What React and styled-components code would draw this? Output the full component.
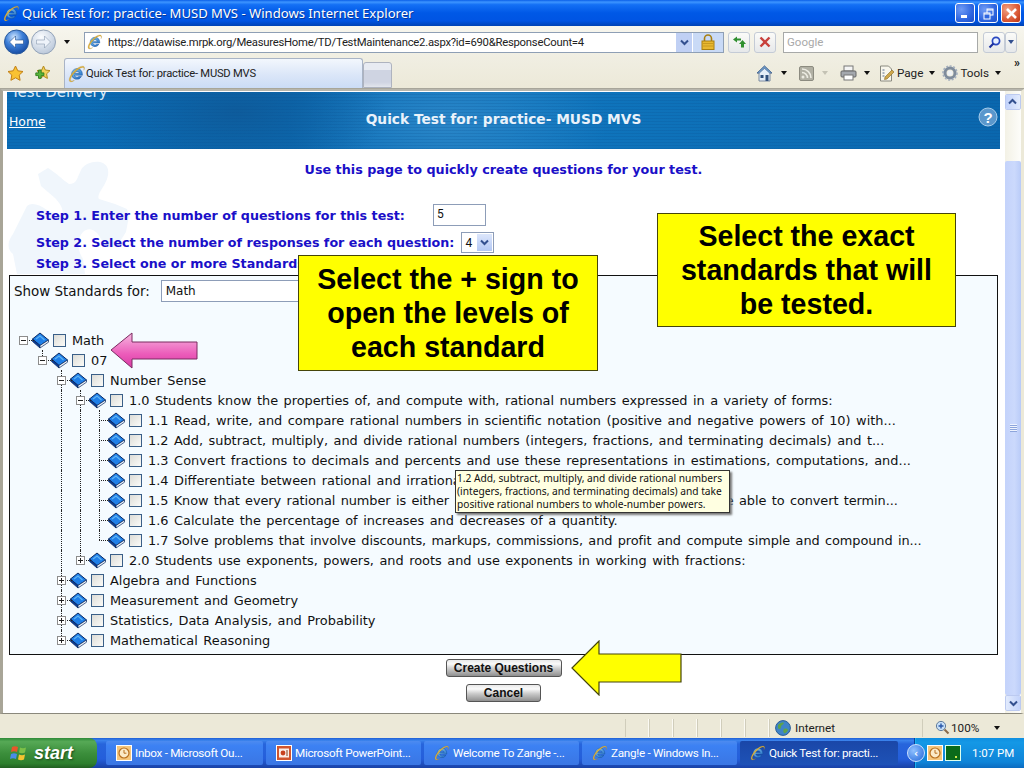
import React from 'react'
import styled, { createGlobalStyle, css } from 'styled-components'

const Global = createGlobalStyle`
  html, body { margin: 0; padding: 0; background: #ece9d8; }
  * { box-sizing: border-box; }
`

const ui = `Roboto, "Noto Sans", sans-serif`
const verdana = `"DejaVu Sans", Verdana, sans-serif`

const Screen = styled.div`
  position: relative;
  width: 1024px;
  height: 768px;
  overflow: hidden;
  display: flex;
  flex-direction: column;
  font-family: ${ui};
`

/* ---- title bar ---- */
const TitleBar = styled.div`
  height: 26px;
  flex: none;
  display: flex;
  align-items: center;
  padding: 0 3px;
  background: linear-gradient(#0a5fe8 0%, #3d95ff 8%, #1470f5 18%, #0058e6 50%, #0054e3 80%, #0043b4 100%);
  color: #fff;
  font: 13.1px "Noto Sans", sans-serif;
  gap: 2px;
`
const TitleText = styled.span`
  flex: 1;
  white-space: nowrap;
  text-shadow: 1px 1px 0 #0a3a9c;
`
const WinButtons = styled.div`
  display: flex;
  gap: 3px;
`
const WinButton = styled.div`
  width: 20px;
  height: 20px;
  border: 1px solid #fff;
  border-radius: 3px;
  display: flex;
  align-items: center;
  justify-content: center;
  background: ${p => p.$red
    ? 'radial-gradient(circle at 30% 30%, #f0a184, #db5a36 60%, #b83212)'
    : 'radial-gradient(circle at 30% 30%, #6f9bf5, #2f66e0 60%, #1d4fc8)'};
`

/* ---- toolbars ---- */
const AddressBar = styled.div`
  height: 32px;
  flex: none;
  display: flex;
  align-items: center;
  padding: 0 7px 0 4px;
  background: linear-gradient(#f7f6ee, #f0eee2);
`
const NavCluster = styled.div`
  display: flex;
  align-items: center;
  width: 80px;
  gap: 2px;
`
const Caret = styled.span`
  display: inline-block;
  width: 0;
  height: 0;
  border-left: 3.5px solid transparent;
  border-right: 3.5px solid transparent;
  border-top: 4px solid ${p => p.$color || '#111'};
  margin: ${p => p.$margin || '0'};
`
const AddressBox = styled.div`
  width: 640px;
  flex: none;
  height: 21px;
  display: flex;
  align-items: center;
  border: 1px solid #8e9fb5;
  background: #fff;
  font-size: 11.3px;
  letter-spacing: -0.25px;
  color: #222;
  padding-left: 2px;
  white-space: nowrap;
`
const UrlText = styled.span`
  flex: 1;
  margin-left: 5px;
  overflow: hidden;
`
const AddrDrop = styled.div`
  width: 16px;
  height: 19px;
  background: #c0d0f4;
  display: flex;
  align-items: center;
  justify-content: center;
`
const LockBox = styled.div`
  width: 30px;
  height: 19px;
  margin-left: 1px;
  background: #c9daf6;
  display: flex;
  align-items: center;
  justify-content: center;
`
const ToolBtn = styled.div`
  width: ${p => p.$w ?? 22}px;
  height: 21px;
  flex: none;
  margin-left: ${p => p.$ml ?? 4}px;
  border: 1px solid #c4cbd6;
  border-radius: 3px;
  background: linear-gradient(#fbfbf8, #e6e8ea);
  display: flex;
  align-items: center;
  justify-content: center;
`
const SearchBox = styled.div`
  width: 195px;
  flex: none;
  height: 21px;
  margin-left: 7px;
  border: 1px solid #a7a9a8;
  background: #fff;
  color: #a9a9a9;
  font-size: 11.5px;
  padding: 2px 3px;
  line-height: 15px;
`
const TabBar = styled.div`
  height: 31px;
  flex: none;
  display: flex;
  align-items: flex-end;
  padding-left: 7px;
  background: linear-gradient(#f0eee2, #ece9d8);
  border-bottom: 1px solid #a8a69a;
`
const FavIcons = styled.div`
  display: flex;
  align-items: center;
  gap: 10px;
  width: 57px;
  height: 30px;
`
const Tab = styled.div`
  width: 299px;
  height: 30px;
  border: 1px solid #a9b4c6;
  border-bottom: none;
  border-radius: 3px 3px 0 0;
  background: linear-gradient(#f3f7fd, #dbe6f8 55%, #cbdcf6);
  display: flex;
  align-items: center;
  padding-left: 3px;
  font-size: 11.2px;
  letter-spacing: -0.23px;
  color: #222;
`
const NewTab = styled.div`
  width: 29px;
  height: 26px;
  border: 1px solid #aeb3bf;
  border-radius: 3px 3px 0 0;
  background: linear-gradient(#e8ebf2 0 30%, #cfd4e2 30% 80%, #e2e5ec);
`
const Commands = styled.div`
  flex: 1;
  height: 30px;
  display: flex;
  align-items: center;
  justify-content: flex-end;
  font-size: 11.7px;
  color: #222;
`
const CmdItem = styled.span`
  display: inline-flex;
  align-items: center;
  margin-left: ${p => p.$ml || 0}px;
  gap: 2px;
`
const Chevrons = styled.span`
  align-self: flex-start;
  font-size: 12px;
  font-weight: 700;
  line-height: 10px;
  margin: 0 4px 0 13px;
`

/* ---- page ---- */
const PageFrame = styled.div`
  flex: 1;
  min-height: 0;
  display: flex;
  background: #fff;
  border-left: 3px solid #a8a597;
  border-top: 2px solid #b7b6ad;
  border-bottom: 1px solid #8a887c;
  border-right: 3px solid #ece9d8;
`
const Content = styled.div`
  position: relative;
  width: 1002px;
  flex: none;
  padding: 1px 5px 0 4px;
  overflow: hidden;
`
const Puzzle = styled.div`
  position: absolute;
  left: 2px;
  top: 63px;
`
const Banner = styled.div`
  position: relative;
  height: 57px;
  overflow: hidden;
  color: #fff;
  background:
    repeating-linear-gradient(#0000 0 2px, #0a4f8f33 2px 3px),
    radial-gradient(ellipse 150px 70px at 230px 20px, #0e5c9c, #0000),
    radial-gradient(ellipse 160px 80px at 440px 30px, #2a86c8, #0000),
    linear-gradient(90deg, #0a6cb5, #0b6cb4 30%, #1077bf 50%, #0a67ae 100%);
`
const BannerRow = styled.div`
  display: grid;
  grid-template-columns: 1fr auto 1fr;
  align-items: center;
  margin-top: 11px;
`
const Delivery = styled.div`
  font: 15px ${verdana};
  line-height: 18px;
  margin: -9px 0 0 4px;
  color: #d8e8f6;
`
const HomeLink = styled.a`
  font: 12.4px ${verdana};
  text-decoration: underline;
  color: #fff;
  margin-left: 2px;
`
const BannerTitle = styled.div`
  font: bold 13.75px ${verdana};
  color: #eaf2fa;
  margin-top: -5px;
`
const HelpIcon = styled.div`
  justify-self: end;
  margin: -5px 2px 0 0;
`
const Intro = styled.div`
  position: relative;
  margin-top: 13px;
  text-align: center;
  font: bold 12.75px ${verdana};
  line-height: 16px;
  color: #1a0fc8;
`
const Step = styled.div`
  position: relative;
  display: flex;
  align-items: center;
  height: ${p => p.$h}px;
  margin-top: ${p => p.$mt || 0}px;
  padding-left: 29px;
  font: bold 12.7px ${verdana};
  color: #1a0fc8;
  white-space: nowrap;
`
const NumInput = styled.div`
  width: 53px;
  height: 22px;
  margin-left: 28px;
  border: 1px solid #8d9db8;
  background: #fff;
  font: 12px ${ui};
  color: #111;
  padding: 2px 3px;
`
const SmallSelect = styled.div`
  width: 33px;
  height: 21px;
  margin-left: 7px;
  border: 1px solid #8d9db8;
  background: #fff;
  font: 12px ${ui};
  color: #111;
  display: flex;
  align-items: center;
  justify-content: space-between;
  padding: 0 1px 0 3px;
`
const DropBtn = styled.div`
  width: 15px;
  height: 17px;
  background: linear-gradient(#dce6fb, #b4c8f4);
  display: flex;
  align-items: center;
  justify-content: center;
`
const TreePanel = styled.div`
  position: relative;
  margin: 1px 2px 0 2px;
  width: 989px;
  height: 380px;
  border: 1px solid #111;
  background: #f5fbff;
  padding-left: 3px;
`
const ShowRow = styled.div`
  display: flex;
  align-items: center;
  height: 22px;
  margin-top: 4px;
  padding-left: 1px;
  font: 13.45px ${verdana};
  color: #111;
  gap: 11px;
`
const ShowSelect = styled.div`
  width: 240px;
  height: 22px;
  border: 1px solid #8d9db8;
  background: #fff;
  font: 12px ${verdana};
  padding: 3px 4px;
`
const Tree = styled.div`
  margin: 28px 0 0 1px;
`
const Row = styled.div`
  display: flex;
  align-items: center;
  height: 20px;
  font: 12.9px ${verdana};
  word-spacing: 1.4px;
  letter-spacing: ${p => p.$ls || 0}px;
  color: #111;
  white-space: nowrap;
`
const Guide = styled.span`
  position: relative;
  width: 19px;
  height: 20px;
  flex: none;
  ${p => p.$line && css`
    &::before {
      content: '';
      position: absolute;
      left: 9px;
      top: 0;
      bottom: 0;
      border-left: 1px dotted #222;
    }
  `}
`
const Joint = styled.span`
  position: relative;
  width: 19px;
  height: 20px;
  flex: none;
  &::before {
    content: '';
    position: absolute;
    left: 9px;
    top: ${p => p.$root ? '10px' : '0'};
    height: ${p => p.$root ? '0' : p.$down ? '20px' : '10px'};
    border-left: 1px dotted #222;
  }
  &::after {
    content: '';
    position: absolute;
    left: 9px;
    right: -1px;
    top: 10px;
    border-top: 1px dotted #222;
  }
`
const Expander = styled.span`
  position: absolute;
  z-index: 1;
  left: 5px;
  top: 6px;
  width: 9px;
  height: 9px;
  border: 1px solid #8c8c8c;
  background: #fff;
  &::before {
    content: '';
    position: absolute;
    left: 1px;
    top: 3px;
    width: 5px;
    height: 1px;
    background: #222;
  }
  ${p => p.$plus && css`
    &::after {
      content: '';
      position: absolute;
      left: 3px;
      top: 1px;
      width: 1px;
      height: 5px;
      background: #222;
    }
  `}
`
const Check = styled.span`
  flex: none;
  width: 13px;
  height: 13px;
  margin: 0 6px 0 3px;
  border: 1px solid #3a5f88;
  background: linear-gradient(135deg, #dcdcd7, #fbfbf8);
`
const BookIcon = styled.svg`
  flex: none;
  margin-left: -2px;
`
const Actions = styled.div`
  position: relative;
  display: flex;
  flex-direction: column;
  align-items: center;
  gap: 7px;
  margin-top: 4px;
`
const GrayButton = styled.div`
  width: ${p => p.$w}px;
  height: 18px;
  border: 1px solid #555;
  border-radius: 3px;
  background: linear-gradient(#e9e9e9, #fafafa 25%, #c9c9c9 55%, #8f8f8f);
  font: bold 12px "Liberation Sans", Arial, sans-serif;
  color: #111;
  display: flex;
  align-items: center;
  justify-content: center;
`

/* ---- scrollbar ---- */
const Scrollbar = styled.div`
  width: 16px;
  flex: none;
  display: flex;
  flex-direction: column;
  background: linear-gradient(90deg, #f3f1e5, #fdfdfa);
  padding: 3px 0 2px;
`
const ScrollArrow = styled.div`
  height: 16px;
  flex: none;
  border: 1px solid #fff;
  outline: 1px solid #bccaf0;
  outline-offset: -1px;
  border-radius: 2px;
  background: linear-gradient(90deg, #e2ebfd, #c3d3fb);
  display: flex;
  align-items: center;
  justify-content: center;
  transform: ${p => p.$up ? 'rotate(180deg)' : 'none'};
`
const ScrollTrack = styled.div`
  flex: 1;
  padding: 51px 0 0;
  display: flex;
`
const Thumb = styled.div`
  flex: 1;
  border-radius: 2px;
  background: linear-gradient(90deg, #c4d3fb, #cbd9fc 60%, #b9cbf8);
  display: flex;
  align-items: center;
  justify-content: center;
`
const Grip = styled.div`
  width: 7px;
  height: 8px;
  background: repeating-linear-gradient(#eef3fe 0 1px, #8da5dc 1px 2px);
`

/* ---- status bar ---- */
const StatusBar = styled.div`
  height: 24px;
  flex: none;
  display: flex;
  align-items: center;
  background: #ece9d8;
  font-size: 11.7px;
  color: #222;
  padding: 3px 0 0 625px;
`
const StatusCell = styled.span`
  width: 24px;
  height: 18px;
  border-left: 1px solid #d0cdbb;
  border-right: 1px solid #fbfaf3;
`
const ZoneCell = styled.span`
  display: flex;
  align-items: center;
  gap: 4px;
  width: 154px;
  height: 18px;
  padding-left: 5px;
  border-left: 1px solid #d0cdbb;
  border-right: 1px solid #d0cdbb;
`
const ZoomCell = styled.span`
  display: flex;
  align-items: center;
  gap: 1px;
  padding-left: 12px;
`

/* ---- taskbar ---- */
const Taskbar = styled.div`
  height: 30px;
  flex: none;
  display: flex;
  align-items: center;
  background: linear-gradient(#1f5fd6 0, #3a82ec 8%, #2765dc 20%, #245edb 70%, #1941a5);
  color: #fff;
  font-size: 11.7px;
`
const StartButton = styled.div`
  width: 97px;
  height: 30px;
  flex: none;
  display: flex;
  align-items: center;
  padding-left: 10px;
  gap: 5px;
  border-radius: 0 8px 8px 0;
  background: linear-gradient(#2f8a38, #56a956 12%, #3c8f3c 50%, #2d7f2d 85%, #215f21);
  font: italic bold 18px "Liberation Sans", Arial, sans-serif;
  text-shadow: 1px 1px 2px #1a4a1a;
`
const TaskItems = styled.div`
  flex: 1;
  display: flex;
  gap: 3px;
  padding-left: 9px;
`
const TaskItem = styled.div`
  width: ${p => p.$w}px;
  height: 24px;
  flex: none;
  border-radius: 2px;
  display: flex;
  align-items: center;
  gap: 3px;
  padding-left: 10px;
  letter-spacing: -0.3px;
  white-space: nowrap;
  background: ${p => p.$active
    ? 'linear-gradient(#1a47a8, #1e52b7)'
    : 'linear-gradient(#4d8bf0, #3c81f3 20%, #3a76e4)'};
`
const Tray = styled.div`
  width: 110px;
  height: 30px;
  flex: none;
  display: flex;
  align-items: center;
  gap: 2px;
  background: linear-gradient(#0f8fe0, #1498e6 15%, #0f84d8 80%, #0c6bc0);
  border-left: 1px solid #0b3f98;
  box-shadow: inset 1px 0 0 #18b3f0;
`
const TrayExpand = styled.span`
  width: 18px;
  height: 18px;
  margin-left: -8px;
  border-radius: 50%;
  background: radial-gradient(circle at 35% 35%, #8fc0ff, #2266d8);
  border: 1px solid #cfe2ff;
  font: bold 10px ${verdana};
  display: flex;
  align-items: center;
  justify-content: center;
`
const Clock = styled.span`
  margin-left: 9px;
  font-size: 11.5px;
`

/* ---- overlays ---- */
const Callout = styled.div`
  position: absolute;
  left: ${p => p.$x}px;
  top: ${p => p.$y}px;
  width: ${p => p.$w}px;
  height: ${p => p.$h}px;
  border: 1px solid #45450a;
  background: #ffff00;
  color: #000;
  font: bold 28.6px/34px "Liberation Sans", Arial, sans-serif;
  text-align: center;
  padding-top: ${p => p.$pt}px;
`
const Tip = styled.div`
  position: absolute;
  left: 455px;
  top: 470px;
  width: 275px;
  height: 43px;
  padding: 1px 1px;
  border: 1px solid #333;
  background: #ffffe1;
  box-shadow: 2px 2px 2px #777;
  font: 10.2px/13px "Noto Sans", sans-serif;
  color: #111;
  white-space: nowrap;
`
const OverlayArrow = styled.svg`
  position: absolute;
  left: ${p => p.$x}px;
  top: ${p => p.$y}px;
`

/* ---- icons ---- */
const IeIcon = ({ size = 16 }) => (
  <svg width={size} height={size} viewBox="0 0 16 16">
    <defs>
      <linearGradient id="iee" x1="0" y1="0" x2="1" y2="1">
        <stop offset="0" stopColor="#8fd3f5" />
        <stop offset="1" stopColor="#1560c0" />
      </linearGradient>
    </defs>
    <path d="M8 3.2a4.8 4.8 0 0 0-4.8 5 4.7 4.7 0 0 0 8.8 2.1H9.6a2.4 2.4 0 0 1-3.9-1.2H12.8C13 5.4 11 3.2 8 3.2Zm-2.3 4.2A2.4 2.4 0 0 1 10.3 7.4Z" fill="url(#iee)" stroke="#0e4a94" strokeWidth=".4" />
    <path d="M13.8 1.2C11.5.4 6.5 3.4 3.2 8 1 11.2.4 14 1.8 14.8c1 .5 2.6-.2 4-1.3-1.2.6-2.6 1-3.2.5-.9-.8.1-3.2 2-5.7C7.6 4.5 11.8 1.6 13.6 2.2c.8.3.8 1.3.4 2.5.8-1.5.9-3 -.2-3.5Z" fill="#e0b23c" stroke="#a07a20" strokeWidth=".2" />
  </svg>
)

const NavButton = ({ back }) => (
  <svg width="25" height="26" viewBox="0 0 25 26">
    <defs>
      <radialGradient id="navb" cx=".4" cy=".3" r=".8">
        <stop offset="0" stopColor="#cfe6ff" />
        <stop offset=".45" stopColor="#3d7fd8" />
        <stop offset="1" stopColor="#0d3f96" />
      </radialGradient>
      <radialGradient id="navf" cx=".4" cy=".3" r=".8">
        <stop offset="0" stopColor="#fbfdff" />
        <stop offset="1" stopColor="#b3c2d6" />
      </radialGradient>
    </defs>
    <circle cx="12.5" cy="13" r="12" fill={back ? 'url(#navb)' : 'url(#navf)'} stroke={back ? '#2a5a9c' : '#93a3b8'} />
    <path d={back ? 'M5.5 13l6-6v4h8v4h-8v4Z' : 'M19.5 13l-6-6v4h-8v4h8v4Z'} fill={back ? '#fff' : '#eef3fa'} stroke={back ? '#1c4a8c' : '#8a9ab0'} strokeWidth=".6" />
  </svg>
)

const Chevron = ({ color = '#33508f' }) => (
  <svg width="9" height="7" viewBox="0 0 9 7"><path d="M1 1.5l3.5 3.5L8 1.5" fill="none" stroke={color} strokeWidth="2" /></svg>
)

const Lock = () => (
  <svg width="14" height="16" viewBox="0 0 14 16">
    <path d="M3.5 7V4.5a3.5 3.5 0 0 1 7 0V7" fill="none" stroke="#a87f10" strokeWidth="1.6" />
    <rect x="1" y="7" width="12" height="8.5" fill="#e8b830" stroke="#a87f10" />
    <path d="M1 9.5h12M1 12h12" stroke="#c89a1e" />
  </svg>
)

const Refresh = () => (
  <svg width="15" height="12" viewBox="0 0 15 12">
    <path d="M1 3.5L5 .5v2h4v2H5v2Z" fill="#2f8f2f" />
    <path d="M10.5 4l3.5 4h-2v3.5H9V8H7Z" fill="#2f8f2f" />
  </svg>
)

const StopX = () => (
  <svg width="12" height="12" viewBox="0 0 12 12"><path d="M1.5 1.5l9 9M10.5 1.5l-9 9" stroke="#c8403c" strokeWidth="2.4" /></svg>
)

const Magnifier = () => (
  <svg width="13" height="13" viewBox="0 0 13 13">
    <circle cx="8" cy="5" r="3.6" fill="#e8f0ff" stroke="#2a48c0" strokeWidth="1.7" />
    <path d="M5.5 7.5L1.5 11.5" stroke="#1c2f9c" strokeWidth="2.2" />
  </svg>
)

const Star = ({ size = 17 }) => (
  <svg width={size} height={size} viewBox="0 0 17 17">
    <path d="M8.5 1l2.3 4.8 5.2.7-3.8 3.6.9 5.2-4.6-2.5-4.6 2.5.9-5.2L1 6.5l5.2-.7Z" fill="#f9c232" stroke="#c27f14" />
  </svg>
)

const AddFav = () => (
  <svg width="17" height="17" viewBox="0 0 17 17">
    <path d="M9.5 1l1.8 4 4.7.6-3.4 3.2.8 4.6-3.9-2.2-3.9 2.2.8-4.6L3 5.6 7.7 5Z" fill="#f3d25a" stroke="#b48a1e" />
    <path d="M5 8v3H2v3h3v3h3v-3h3v-3H8V8Z" transform="translate(0 -2) scale(.9)" fill="#59b53a" stroke="#2c7a1c" />
  </svg>
)

const Home = () => (
  <svg width="17" height="17" viewBox="0 0 17 17">
    <path d="M8.5 1L1 8h2v8h11V8h2Z" fill="#e5eef8" stroke="#7a8aa0" />
    <path d="M8.5 1L1 8h2.4l5.1-4.6L13.6 8H16Z" fill="#6f9ac8" stroke="#3c5f8c" strokeWidth=".6" />
    <rect x="9.5" y="10" width="3" height="6" fill="#30507c" />
    <rect x="4.5" y="10" width="3" height="3" fill="#30507c" />
  </svg>
)

const Feed = () => (
  <svg width="15" height="15" viewBox="0 0 15 15">
    <rect x=".5" y=".5" width="14" height="14" rx="1.5" fill="#b1b0a4" stroke="#8c8b80" />
    <circle cx="4" cy="11" r="1.5" fill="#ecebe2" />
    <path d="M3 6.5a5.5 5.5 0 0 1 5.5 5.5M3 3a9 9 0 0 1 9 9" fill="none" stroke="#ecebe2" strokeWidth="1.6" />
  </svg>
)

const Printer = () => (
  <svg width="17" height="16" viewBox="0 0 17 16">
    <rect x="4" y="1" width="9" height="5" fill="#f4f4f4" stroke="#777" />
    <rect x="1" y="6" width="15" height="6" rx="1" fill="#a4a8ae" stroke="#666" />
    <rect x="4" y="10" width="9" height="5" fill="#fff" stroke="#777" />
  </svg>
)

const PageIcon = () => (
  <svg width="16" height="17" viewBox="0 0 16 17">
    <path d="M1.5 1h8l3 3v12h-11Z" fill="#f8f6ec" stroke="#8a8a80" />
    <path d="M3.5 5h2M3.5 8h2M3.5 11h2" stroke="#5a6c8c" />
    <path d="M6 12l7-7 2 2-7 7-2.5.5Z" fill="#cfa84c" stroke="#8a6a20" strokeWidth=".6" />
  </svg>
)

const Gear = () => (
  <svg width="16" height="16" viewBox="0 0 16 16">
    <circle cx="8" cy="8" r="5" fill="none" stroke="#7f8c9c" strokeWidth="3" />
    <circle cx="8" cy="8" r="7" fill="none" stroke="#a4afbd" strokeWidth="1.6" strokeDasharray="2 1.6" />
    <circle cx="8" cy="8" r="2.6" fill="#eef2f6" />
  </svg>
)

const Book = () => (
  <BookIcon width="19" height="17" viewBox="0 0 19 17">
    <path d="M1.5 7L9 1l8.5 7-8.5 5.5Z" fill="#1f7fe8" stroke="#0a2a60" />
    <path d="M5 7l4-3 4.5 4" fill="none" stroke="#5fb4f4" strokeWidth="1.3" />
    <path d="M1.5 7L9 13.5V16L1.5 9.5Z" fill="#0a3a94" stroke="#0a2a60" strokeWidth=".7" />
    <path d="M9 13.5L17.5 8v2.2L9 16Z" fill="#eef3fa" stroke="#0a2a60" strokeWidth=".7" />
  </BookIcon>
)

const HelpBadge = () => (
  <svg width="20" height="20" viewBox="0 0 20 20">
    <circle cx="10" cy="10" r="9" fill="#5a97cc" stroke="#a8cdec" />
    <text x="10" y="15.5" textAnchor="middle" fill="#fff" fontSize="15" fontWeight="700" fontFamily="Liberation Sans, sans-serif">?</text>
  </svg>
)

const PuzzleShape = () => (
  <svg viewBox="0 0 125 125" width="125" height="125">
    <path d="M33 20L43 14C50 18 58 26 64 30C72 30 72 24 76 16C80 8 92 6 98 9C106 13 104 24 98 33C95 38 92 42 94 45L110 50L122 55L124 62L121 78L112 92C105 95 100 92 96 85C92 76 84 72 78 78C72 84 72 96 78 105L80 120L12 120L8 100C2 95 2 88 8 80L22 52C26 48 34 50 42 56L56 62C60 58 56 50 50 44L36 32Z" fill="#f0f6fc" />
  </svg>
)

const Globe = () => (
  <svg width="16" height="16" viewBox="0 0 16 16">
    <circle cx="8" cy="8" r="7.4" fill="#3f84c8" stroke="#2a5f98" />
    <path d="M3 5c2-2 4-3 6-2-1 2-3 2-3 4s-2 3-3 1ZM9 9c2-1 4 0 4 1-1 2-3 4-4 3s-1-3 0-4Z" fill="#5ea34a" />
  </svg>
)

const ZoomGlass = () => (
  <svg width="15" height="15" viewBox="0 0 15 15">
    <circle cx="6" cy="6" r="4.6" fill="#c8e0f8" stroke="#607c9c" />
    <path d="M6 3.5v5M3.5 6h5" stroke="#2a58a8" strokeWidth="1.4" />
    <path d="M9.5 9.5l4 4" stroke="#8a6a4a" strokeWidth="2" />
  </svg>
)

const WinFlag = () => (
  <svg width="19" height="18" viewBox="0 0 19 18">
    <path d="M2 3c2-1 4-1 6 0l-1 5c-2-1-4-1-6 0Z" fill="#e8562a" />
    <path d="M10 3.5c2 1 4 1 6 0l-1 5c-2 1-4 1-6 0Z" fill="#7cc048" />
    <path d="M1 10c2-1 4-1 6 0l-1 5c-2-1-4-1-6 0Z" fill="#4a8ce8" />
    <path d="M9 10.5c2 1 4 1 6 0l-1 5c-2 1-4 1-6 0Z" fill="#f4c430" />
  </svg>
)

const OutlookClock = () => (
  <svg width="16" height="16" viewBox="0 0 16 16">
    <rect x=".5" y=".5" width="15" height="15" fill="#f5c67c" stroke="#fff" />
    <circle cx="8" cy="8" r="5" fill="#fbeac8" stroke="#b87020" strokeWidth="1.2" />
    <path d="M8 5v3.2h2.4" fill="none" stroke="#b87020" />
  </svg>
)

const PptIcon = () => (
  <svg width="16" height="16" viewBox="0 0 16 16">
    <rect x=".5" y=".5" width="15" height="15" fill="#d0552e" stroke="#fff" />
    <rect x="3" y="3.5" width="10" height="9" fill="#fbeee6" />
    <circle cx="7" cy="8" r="2.4" fill="#c8421e" />
    <path d="M10 6h2M10 8h2M10 10h2" stroke="#804020" />
  </svg>
)

const Minimize = () => (
  <svg width="12" height="12" viewBox="0 0 12 12"><rect x="2" y="8" width="6" height="3" fill="#fff" /></svg>
)
const Restore = () => (
  <svg width="13" height="13" viewBox="0 0 13 13" fill="none" stroke="#fff">
    <rect x="5" y="2" width="6" height="6" /><path d="M5 3h6" />
    <rect x="2" y="6" width="6" height="6" fill="#2f66e0" /><path d="M2 7h6" />
  </svg>
)
const CloseX = () => (
  <svg width="13" height="13" viewBox="0 0 13 13"><path d="M2 2l9 9M11 2l-9 9" stroke="#fff" strokeWidth="2.6" /></svg>
)
const TrayMeter = () => (
  <svg width="16" height="16" viewBox="0 0 16 16"><rect x=".5" y=".5" width="15" height="15" fill="#0a6a1a" stroke="#dfe" /><rect x="10" y="11" width="2" height="2" fill="#cfe84a" /></svg>
)

const PinkArrow = () => (
  <OverlayArrow $x={110} $y={332} width="89" height="37" viewBox="0 0 89 37">
    <defs>
      <linearGradient id="pink" x1="0" y1="0" x2="0" y2="1">
        <stop offset="0" stopColor="#f6b8e0" />
        <stop offset=".6" stopColor="#ec5cba" />
        <stop offset="1" stopColor="#d83aa4" />
      </linearGradient>
    </defs>
    <path d="M1 18L22 1v9h65v17H22v9Z" fill="url(#pink)" stroke="#7a2a60" />
  </OverlayArrow>
)

const YellowArrow = () => (
  <OverlayArrow $x={571} $y={640} width="112" height="56" viewBox="0 0 112 56">
    <path d="M1 28L28 1v13h82v28H28v13Z" fill="#ffff00" stroke="#45450a" strokeWidth="1.2" />
  </OverlayArrow>
)

/* ---- tree data ---- */
const tree = [
  { level: 0, guides: [], exp: 'minus', root: true, text: 'Math' },
  { level: 1, guides: [], exp: 'minus', text: '07' },
  { level: 2, guides: [], exp: 'minus', down: true, text: 'Number Sense' },
  { level: 3, guides: [2], exp: 'minus', down: true, ls: -0.03, text: '1.0 Students know the properties of, and compute with, rational numbers expressed in a variety of forms:' },
  { level: 4, guides: [2, 3], down: true, text: '1.1 Read, write, and compare rational numbers in scientific notation (positive and negative powers of 10) with...' },
  { level: 4, guides: [2, 3], down: true, text: '1.2 Add, subtract, multiply, and divide rational numbers (integers, fractions, and terminating decimals) and t...' },
  { level: 4, guides: [2, 3], down: true, ls: 0.03, text: '1.3 Convert fractions to decimals and percents and use these representations in estimations, computations, and...' },
  { level: 4, guides: [2, 3], down: true, text: '1.4 Differentiate between rational and irrational numbers.' },
  { level: 4, guides: [2, 3], down: true, ls: -0.08, text: '1.5 Know that every rational number is either a terminating or repeating decimal and be able to convert termin...' },
  { level: 4, guides: [2, 3], down: true, text: '1.6 Calculate the percentage of increases and decreases of a quantity.' },
  { level: 4, guides: [2, 3], ls: -0.08, text: '1.7 Solve problems that involve discounts, markups, commissions, and profit and compute simple and compound in...' },
  { level: 3, guides: [2], exp: 'plus', text: '2.0 Students use exponents, powers, and roots and use exponents in working with fractions:' },
  { level: 2, guides: [], exp: 'plus', down: true, text: 'Algebra and Functions' },
  { level: 2, guides: [], exp: 'plus', down: true, text: 'Measurement and Geometry' },
  { level: 2, guides: [], exp: 'plus', down: true, text: 'Statistics, Data Analysis, and Probability' },
  { level: 2, guides: [], exp: 'plus', text: 'Mathematical Reasoning' },
]

function TreeRow({ node }) {
  const cols = []
  for (let i = 0; i < node.level; i++) {
    cols.push(<Guide key={i} $line={node.guides.includes(i)} />)
  }
  return (
    <Row $ls={node.ls}>
      {cols}
      <Joint $root={node.root} $down={node.down}>
        {node.exp && <Expander $plus={node.exp === 'plus'} />}
      </Joint>
      <Book />
      <Check />
      {node.text}
    </Row>
  )
}

const tasks = [
  { w: 157, icon: <OutlookClock />, text: 'Inbox - Microsoft Ou...' },
  { w: 155, icon: <PptIcon />, text: 'Microsoft PowerPoint...' },
  { w: 155, icon: <IeIcon />, text: 'Welcome To Zang!e -...' },
  { w: 155, icon: <IeIcon />, text: 'Zang!e - Windows In...' },
  { w: 158, icon: <IeIcon />, text: 'Quick Test for: practi...', active: true },
]

export default function App() {
  return (
    <Screen>
      <Global />
      <TitleBar>
        <IeIcon size={17} />
        <TitleText>Quick Test for: practice- MUSD MVS - Windows Internet Explorer</TitleText>
        <WinButtons>
          <WinButton><Minimize /></WinButton>
          <WinButton><Restore /></WinButton>
          <WinButton $red><CloseX /></WinButton>
        </WinButtons>
      </TitleBar>

      <AddressBar>
        <NavCluster>
          <NavButton back />
          <NavButton />
          <Caret $margin="0 0 0 6px" />
        </NavCluster>
        <AddressBox>
          <IeIcon />
          <UrlText>https://datawise.mrpk.org/MeasuresHome/TD/TestMaintenance2.aspx?id=690&amp;ResponseCount=4</UrlText>
          <AddrDrop><Chevron /></AddrDrop>
          <LockBox><Lock /></LockBox>
        </AddressBox>
        <ToolBtn><Refresh /></ToolBtn>
        <ToolBtn><StopX /></ToolBtn>
        <SearchBox>Google</SearchBox>
        <ToolBtn $ml={5}><Magnifier /></ToolBtn>
        <ToolBtn $ml={0} $w={12}><Caret $color="#33508f" /></ToolBtn>
      </AddressBar>

      <TabBar>
        <FavIcons><Star /><AddFav /></FavIcons>
        <Tab><IeIcon size={18} />Quick Test for: practice- MUSD MVS</Tab>
        <NewTab />
        <Commands>
          <CmdItem><Home /><Caret $margin="0 0 0 6px" /></CmdItem>
          <CmdItem $ml={12}><Feed /><Caret $color="#c4c2b4" $margin="0 0 0 6px" /></CmdItem>
          <CmdItem $ml={12}><Printer /><Caret $margin="0 0 0 5px" /></CmdItem>
          <CmdItem $ml={9}><PageIcon />Page<Caret $margin="0 0 0 4px" /></CmdItem>
          <CmdItem $ml={7}><Gear />Tools<Caret $margin="0 0 0 4px" /></CmdItem>
          <Chevrons>»</Chevrons>
        </Commands>
      </TabBar>

      <PageFrame>
        <Content>
          <Puzzle><PuzzleShape /></Puzzle>
          <Banner>
            <Delivery>Test Delivery</Delivery>
            <BannerRow>
              <HomeLink>Home</HomeLink>
              <BannerTitle>Quick Test for: practice- MUSD MVS</BannerTitle>
              <HelpIcon><HelpBadge /></HelpIcon>
            </BannerRow>
          </Banner>
          <Intro>Use this page to quickly create questions for your test.</Intro>
          <Step $h={22} $mt={26}>Step 1. Enter the number of questions for this test:<NumInput>5</NumInput></Step>
          <Step $h={21} $mt={6}>Step 2. Select the number of responses for each question:
            <SmallSelect>4<DropBtn><Chevron /></DropBtn></SmallSelect>
          </Step>
          <Step $h={21}>Step 3. Select one or more Standards:</Step>
          <TreePanel>
            <ShowRow>Show Standards for:<ShowSelect>Math</ShowSelect></ShowRow>
            <Tree>
              {tree.map((node, i) => <TreeRow key={i} node={node} />)}
            </Tree>
          </TreePanel>
          <Actions>
            <GrayButton $w={116}>Create Questions</GrayButton>
            <GrayButton $w={75}>Cancel</GrayButton>
          </Actions>
        </Content>
        <Scrollbar>
          <ScrollArrow $up><Chevron /></ScrollArrow>
          <ScrollTrack><Thumb><Grip /></Thumb></ScrollTrack>
          <ScrollArrow><Chevron /></ScrollArrow>
        </Scrollbar>
      </PageFrame>

      <StatusBar>
        <StatusCell /><StatusCell /><StatusCell /><StatusCell /><StatusCell /><StatusCell />
        <ZoneCell><Globe />Internet</ZoneCell>
        <ZoomCell><ZoomGlass />100%<Caret $margin="0 0 0 14px" /></ZoomCell>
      </StatusBar>

      <Taskbar>
        <StartButton><WinFlag />start</StartButton>
        <TaskItems>
          {tasks.map((t, i) => (
            <TaskItem key={i} $w={t.w} $active={t.active}>{t.icon}{t.text}</TaskItem>
          ))}
        </TaskItems>
        <Tray>
          <TrayExpand>‹</TrayExpand>
          <OutlookClock />
          <TrayMeter />
          <Clock>1:07 PM</Clock>
        </Tray>
      </Taskbar>

      <Callout $x={298} $y={255} $w={300} $h={116} $pt={6}>Select the + sign to<br />open the levels of<br />each standard</Callout>
      <Callout $x={657} $y={213} $w={299} $h={114} $pt={5}>Select the exact<br />standards that will<br />be tested.</Callout>
      <Tip>1.2 Add, subtract, multiply, and divide rational numbers<br />(integers, fractions, and terminating decimals) and take<br />positive rational numbers to whole-number powers.</Tip>
      <PinkArrow />
      <YellowArrow />
    </Screen>
  )
}
